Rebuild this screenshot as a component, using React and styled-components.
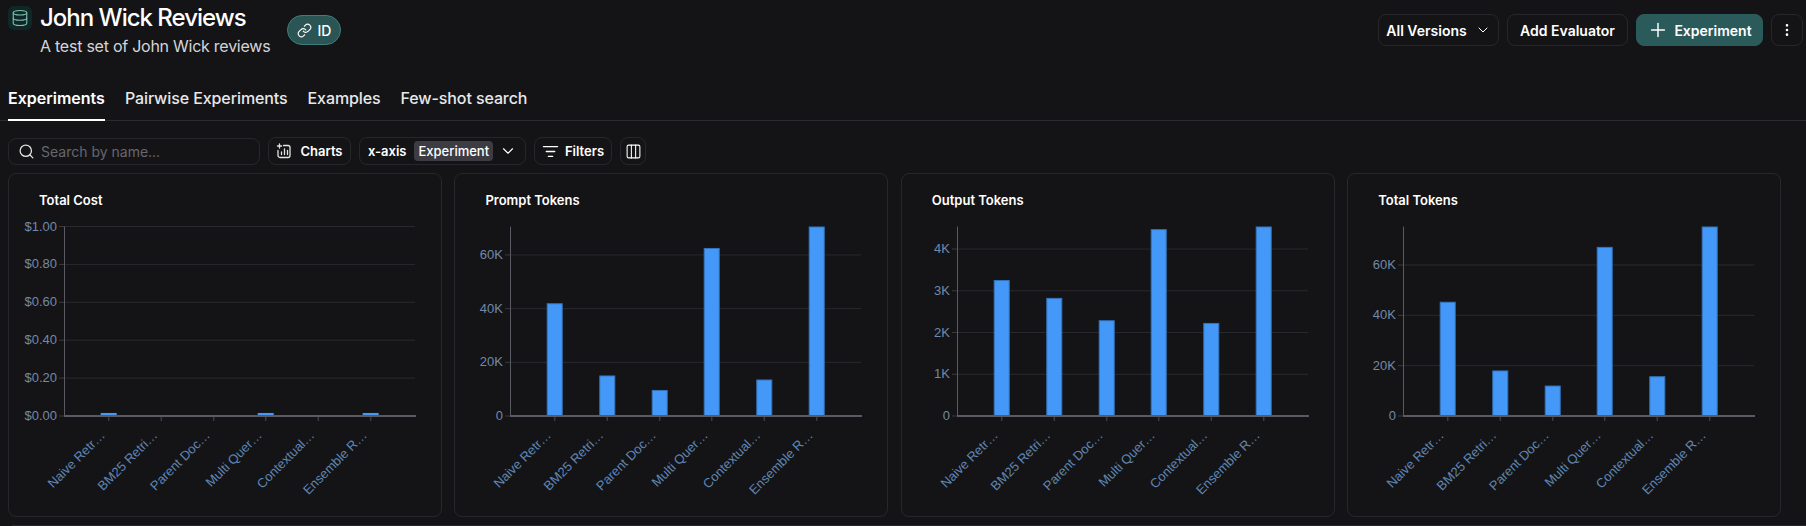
import React from "react";
import styled, { createGlobalStyle } from "styled-components";
import {
  ChevronDown,
  Columns3,
  Database,
  EllipsisVertical,
  Link,
  ListFilter,
  Plus,
  Search,
} from "lucide-react";

const GlobalStyle = createGlobalStyle`
  html, body {
    margin: 0;
    height: 526px;
    overflow: hidden;
    background: #141417;
    color: #fff;
    font-family: Inter, "Liberation Sans", sans-serif;
  }
  * { box-sizing: border-box; }
`;

const Page = styled.div`
  width: 1806px;
  height: 526px;
  display: flex;
  flex-direction: column;
`;

const Header = styled.header`
  height: 71px;
  padding: 6px 3px 0 8px;
  display: flex;
  justify-content: space-between;
  align-items: flex-start;
`;

const HeaderLeft = styled.div`
  display: flex;
  align-items: flex-start;
`;

const DbIcon = styled.div`
  width: 24px;
  height: 24px;
  border-radius: 6px;
  background: #0f2727;
  color: #7dbfae;
  display: flex;
  align-items: center;
  justify-content: center;
`;

const TitleBlock = styled.div`
  margin-left: 8px;
  width: 247px;
`;

const Title = styled.h1`
  margin: 0;
  font-size: 24px;
  line-height: 24px;
  font-weight: 500;
  letter-spacing: -1px;
  color: #fff;
`;

const Subtitle = styled.p`
  margin: 4px 0 0;
  font-size: 16px;
  line-height: 24px;
  letter-spacing: -0.25px;
  color: #d4d4d8;
`;

const IdPill = styled.div`
  margin-top: 9px;
  height: 30px;
  width: 54px;
  border-radius: 15px;
  border: 1px solid #3f7d7b;
  background: #2b5454;
  display: flex;
  align-items: center;
  justify-content: center;
  gap: 6px;
  font-size: 14px;
  font-weight: 500;
`;

const HeaderActions = styled.div`
  margin-top: 8px;
  display: flex;
  gap: 8px;
`;

const Button = styled.button`
  height: ${(p) => p.$height || 32}px;
  width: ${(p) => (p.$width ? `${p.$width}px` : "auto")};
  padding: 0;
  border-radius: 8px;
  border: 1px solid ${(p) => (p.$primary ? "#2b5a5a" : "#27272b")};
  background: ${(p) => (p.$primary ? "#2b5a5a" : "transparent")};
  color: #fff;
  font-family: inherit;
  font-size: ${(p) => p.$size || 14}px;
  font-weight: ${(p) => p.$weight || 600};
  display: flex;
  align-items: center;
  justify-content: center;
  gap: ${(p) => p.$gap ?? 8}px;
`;

const Tabs = styled.nav`
  height: 50px;
  padding: 0 8px;
  display: flex;
  gap: 20px;
  align-items: stretch;
  border-bottom: 1px solid #2c2c30;
`;

const Tab = styled.div`
  display: flex;
  align-items: center;
  margin-bottom: -1px;
  padding-top: 5px;
  font-size: 16px;
  font-weight: ${(p) => (p.$active ? 600 : 500)};
  letter-spacing: ${(p) => (p.$active ? 0 : -0.1)}px;
  color: ${(p) => (p.$active ? "#fff" : "#e8e8ea")};
  border-bottom: 2px solid ${(p) => (p.$active ? "#fff" : "transparent")};
`;

const Toolbar = styled.div`
  margin-top: 16px;
  padding: 0 8px;
  display: flex;
  gap: 8px;
`;

const SearchBox = styled.div`
  width: 252px;
  height: 27px;
  margin-top: 1px;
  padding-left: 9px;
  border: 1px solid #27272b;
  border-radius: 8px;
  display: flex;
  align-items: center;
  gap: 6px;
  color: #e4e4e7;
  font-size: 14px;

  span {
    color: #666670;
  }
`;

const AxisTag = styled.span`
  background: #3c3c42;
  border-radius: 4px;
  padding: 2px 4px;
  margin-left: 8px;
  font-weight: 500;
`;

const AxisChevron = styled(ChevronDown)`
  margin-left: 6px;
`;

const ChartGrid = styled.section`
  margin: 8px 0 0 8px;
  width: 1774px;
  display: grid;
  grid-template-columns: repeat(4, 434px);
  gap: 12.4px;
`;

const Card = styled.article`
  height: 344px;
  border: 1px solid #27272b;
  border-radius: 8px;
  display: flex;
  flex-direction: column;
`;

const CardTitle = styled.h2`
  margin: 0;
  padding: 18px 0 0 30px;
  height: 52px;
  font-size: 13px;
  line-height: 16px;
  font-weight: 600;
  color: #fff;
`;

const Plot = styled.svg`
  display: block;
  overflow: visible;
  font-family: "Liberation Sans", Arial, sans-serif;
  font-size: 13px;
`;

const FootLine = styled.div`
  margin: 8px 0 0 12px;
  height: 1px;
  background: #27272b;
`;

// plot area inside the svg
const AXIS_X = 55;
const AXIS_Y = 190;
const PLOT_W = 351;
const PLOT_H = 189.5;
const CENTERS = [44.7, 97.3, 149.7, 201.7, 254.3, 306.7];
const LABELS = [
  "Naive Retr…",
  "BM25 Retri…",
  "Parent Doc…",
  "Multi Quer…",
  "Contextual…",
  "Ensemble R…",
];

const CHARTS = [
  {
    title: "Total Cost",
    max: 1,
    ticks: [0, 0.2, 0.4, 0.6, 0.8, 1],
    format: (v) => `$${v.toFixed(2)}`,
    values: [0.016, 0, 0, 0.016, 0, 0.016],
  },
  {
    title: "Prompt Tokens",
    max: 70600,
    ticks: [0, 20000, 40000, 60000],
    format: (v) => (v ? `${v / 1000}K` : "0"),
    values: [42000, 15100, 9700, 62600, 13600, 70600],
  },
  {
    title: "Output Tokens",
    max: 4540,
    ticks: [0, 1000, 2000, 3000, 4000],
    format: (v) => (v ? `${v / 1000}K` : "0"),
    values: [3257, 2830, 2294, 4476, 2230, 4540],
  },
  {
    title: "Total Tokens",
    max: 75300,
    ticks: [0, 20000, 40000, 60000],
    format: (v) => (v ? `${v / 1000}K` : "0"),
    values: [45400, 18100, 12100, 67200, 15800, 75300],
  },
];

const ChartsIcon = () => (
  <svg width="16" height="16" viewBox="0 0 16 16" fill="none" stroke="#e4e4e7" strokeWidth="1.3" strokeLinecap="round">
    <path d="M7.5 2.5H12a2 2 0 0 1 2 2v8a2 2 0 0 1-2 2H4a2 2 0 0 1-2-2V7.5" />
    <path d="M3.5 1v4M1.5 3h4M5.5 11.5V9M8.5 11.5V6M11.5 11.5V7.5" />
  </svg>
);

const BarChart = ({ chart }) => {
  const y = (v) => AXIS_Y - (v / chart.max) * PLOT_H;
  return (
    <Plot width="432" height="290">
      {chart.ticks.filter((t) => t > 0).map((t) => (
        <line key={t} x1={AXIS_X} x2={AXIS_X + PLOT_W} y1={y(t)} y2={y(t)} stroke="#2a2a2e" />
      ))}
      {chart.ticks.map((t) => (
        <g key={t}>
          <line x1={AXIS_X - 5} x2={AXIS_X} y1={y(t)} y2={y(t)} stroke="#3a3a40" />
          <text x={AXIS_X - 7} y={y(t) + 4} textAnchor="end" fill="#7289a8">
            {chart.format(t)}
          </text>
        </g>
      ))}
      {chart.values.map((v, i) =>
        v / chart.max > 0.05 ? (
          <rect
            key={i}
            x={AXIS_X + CENTERS[i] - 7.5}
            y={y(v) + 0.5}
            width="15"
            height={AXIS_Y - y(v)}
            fill="#4499f8"
            stroke="#3574bd"
          />
        ) : v > 0 ? (
          <rect key={i} x={AXIS_X + CENTERS[i] - 8} y={y(v)} width="16" height={AXIS_Y - y(v)} fill="#4499f8" />
        ) : null
      )}
      <line x1={AXIS_X + 0.5} x2={AXIS_X + 0.5} y1={AXIS_Y - PLOT_H} y2={AXIS_Y} stroke="#5a5a62" />
      <line x1={AXIS_X} x2={AXIS_X + PLOT_W + 1} y1={AXIS_Y} y2={AXIS_Y} stroke="#5a5a62" strokeWidth="2" />
      {CENTERS.map((c, i) => (
        <g key={c}>
          <line x1={AXIS_X + c} x2={AXIS_X + c} y1={AXIS_Y + 1} y2={AXIS_Y + 5} stroke="#3a3a40" strokeWidth="1.5" />
          <text
            transform={`translate(${AXIS_X + c - 3} ${AXIS_Y + 20}) rotate(-45)`}
            textAnchor="end"
            fill="#5f86b3"
          >
            {LABELS[i]}
          </text>
        </g>
      ))}
    </Plot>
  );
};

const App = () => (
  <Page>
    <GlobalStyle />
    <Header>
      <HeaderLeft>
        <DbIcon>
          <Database size={18} strokeWidth={1.5} />
        </DbIcon>
        <TitleBlock>
          <Title>John Wick Reviews</Title>
          <Subtitle>A test set of John Wick reviews</Subtitle>
        </TitleBlock>
        <IdPill>
          <Link size={15} strokeWidth={1.8} />
          ID
        </IdPill>
      </HeaderLeft>
      <HeaderActions>
        <Button $width={121}>
          All Versions
          <ChevronDown size={16} strokeWidth={1.5} />
        </Button>
        <Button $width={121}>Add Evaluator</Button>
        <Button $primary $width={127} $gap={5}>
          <Plus size={22} strokeWidth={1.6} />
          Experiment
        </Button>
        <Button $width={32}>
          <EllipsisVertical size={16} />
        </Button>
      </HeaderActions>
    </Header>
    <Tabs>
      <Tab $active>Experiments</Tab>
      <Tab>Pairwise Experiments</Tab>
      <Tab>Examples</Tab>
      <Tab>Few-shot search</Tab>
    </Tabs>
    <Toolbar>
      <SearchBox>
        <Search size={17} strokeWidth={1.8} />
        <span>Search by name...</span>
      </SearchBox>
      <Button $height={28} $width={83} $size={13} $weight={600}>
        <ChartsIcon />
        Charts
      </Button>
      <Button $height={28} $width={167} $size={13} $gap={0}>
        x-axis
        <AxisTag>Experiment</AxisTag>
        <AxisChevron size={18} strokeWidth={1.5} />
      </Button>
      <Button $height={28} $width={78} $size={13} $gap={6}>
        <ListFilter size={17} strokeWidth={1.8} />
        Filters
      </Button>
      <Button $height={28} $width={26}>
        <Columns3 size={17} strokeWidth={1.5} />
      </Button>
    </Toolbar>
    <ChartGrid>
      {CHARTS.map((chart) => (
        <Card key={chart.title}>
          <CardTitle>{chart.title}</CardTitle>
          <BarChart chart={chart} />
        </Card>
      ))}
    </ChartGrid>
    <FootLine />
  </Page>
);

export default App;
